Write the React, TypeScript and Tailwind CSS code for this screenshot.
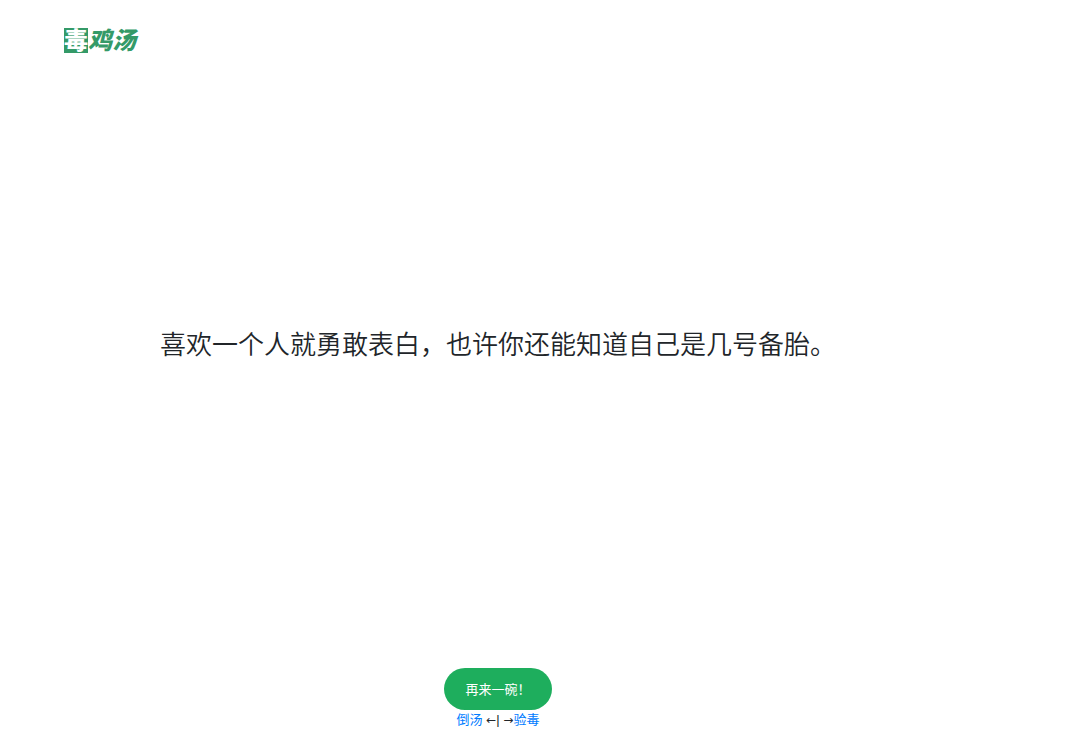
import React from 'react'

interface Soup {
  id: number
  text: string
}

const soup: Soup = {
  id: 1,
  text: '喜欢一个人就勇敢表白，也许你还能知道自己是几号备胎。',
}

function Logo() {
  return (
    <a
      href="#home"
      className="inline-flex items-center text-[24px] leading-[25px] font-black text-[#349a68]"
    >
      <span className="bg-[#349a68] text-white">毒</span>
      <span className="italic">鸡汤</span>
    </a>
  )
}

export default function App() {
  return (
    <div className="flex min-h-screen flex-col bg-white pr-[84px] font-['Liberation_Sans','Noto_Sans_CJK_SC',sans-serif] text-[#212529]">
      <header className="flex px-16 pt-7">
        <Logo />
      </header>

      <main className="flex flex-1 items-center justify-center px-4 pb-[30px]">
        <p className="text-center text-[26px] leading-[39px] font-[350]">{soup.text}</p>
      </main>

      <footer className="flex flex-col items-center pb-[10px] text-[13px] leading-5">
        <button
          type="button"
          className="rounded-full bg-[#1eae5d] px-[21px] pt-3 pb-[10px] text-white"
        >
          再来一碗！
        </button>
        <p>
          <a href="#pour" className="text-[#007bff]">倒汤</a>{' '}
          <span className="font-['DejaVu_Sans',sans-serif] text-[12px]">←</span>|{' '}
          <span className="font-['DejaVu_Sans',sans-serif] text-[12px]">→</span>
          <a href="#test" className="text-[#007bff]">验毒</a>
        </p>
      </footer>
    </div>
  )
}
